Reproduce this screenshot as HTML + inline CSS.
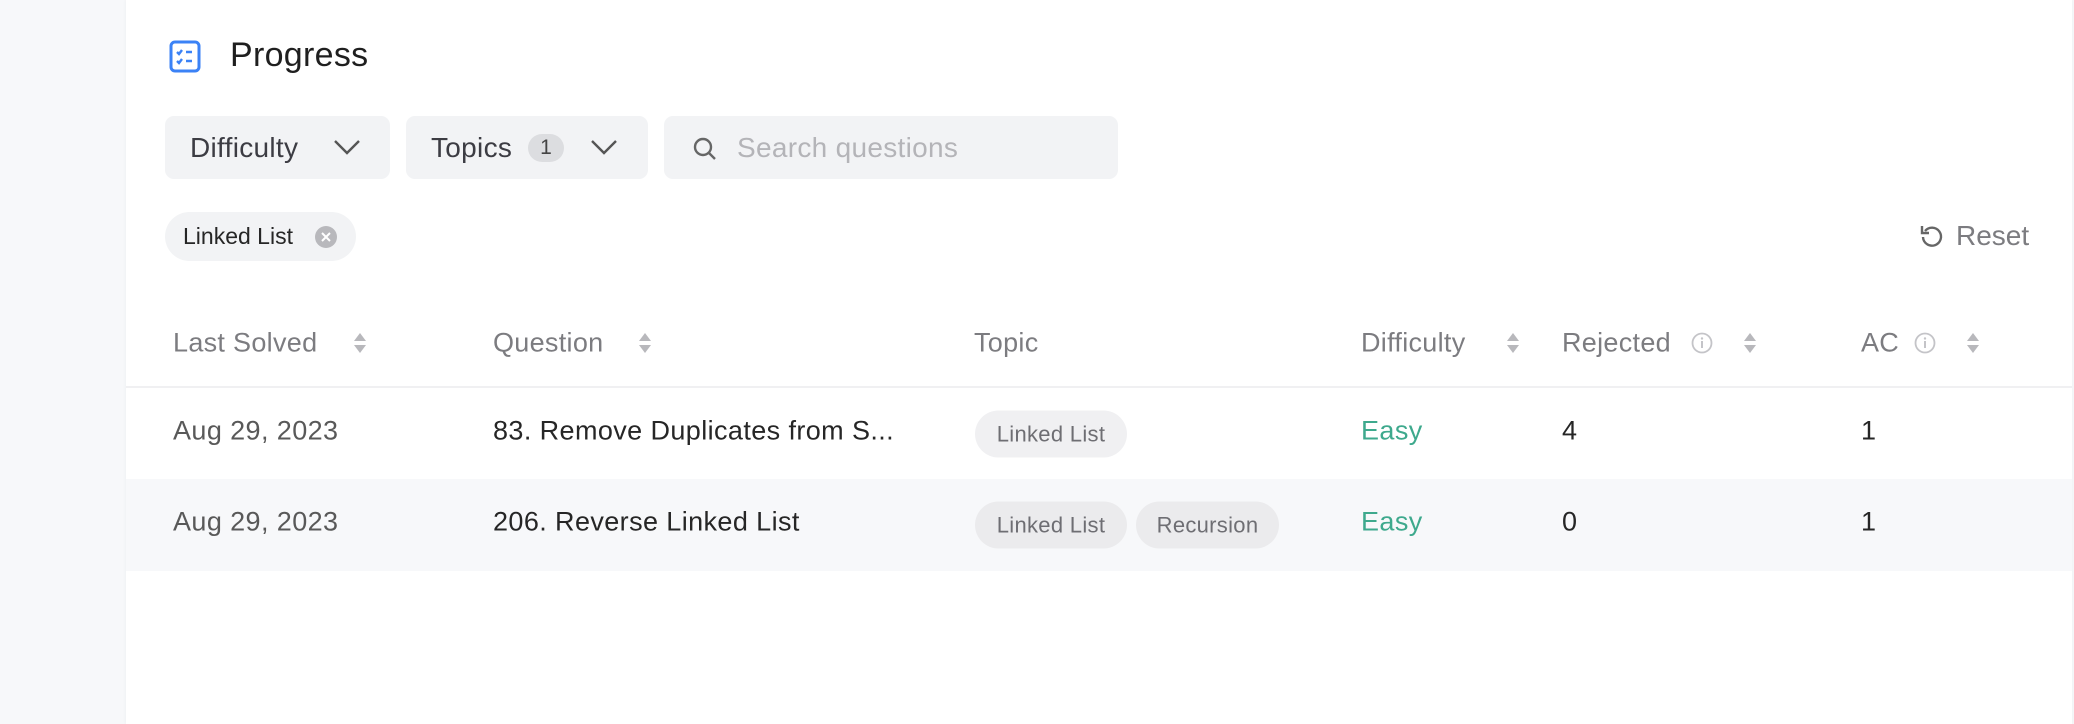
<!DOCTYPE html>
<html><head><meta charset="utf-8"><style>
*{box-sizing:border-box;margin:0;padding:0}
body{width:2074px;height:724px;background:#f7f8fa;font-family:"Liberation Sans",sans-serif;position:relative;overflow:hidden;color:#262626}
.card{position:absolute;left:126px;top:0;width:1946px;height:724px;background:#fff;box-shadow:0 0 4px rgba(0,0,0,.05)}
.a{position:absolute}
.btn{position:absolute;top:116px;height:63px;background:#f2f3f5;border-radius:9px;font-size:28px;letter-spacing:0.3px;color:#3c3c43;display:flex;align-items:center}
.hd{position:absolute;top:343px;transform:translateY(-50%);font-size:27px;letter-spacing:0.3px;color:#7c7c80}
.cell{position:absolute;transform:translateY(-50%);font-size:27px;letter-spacing:0.4px;color:#262626}
.tag{position:absolute;transform:translateY(-50%);height:47px;border-radius:24px;background:#f0f0f2;color:#6e6e73;font-size:22px;letter-spacing:0.3px;display:flex;align-items:center;justify-content:center}
.easy{color:#3ea98d}
</style></head><body>
<div class="card"></div>
<svg class="a" style="left:169px;top:40px" width="32" height="33" viewBox="0 0 32 33"><rect x="2" y="2" width="28" height="29" rx="4" fill="none" stroke="#3b82f6" stroke-width="3"/><path d="M8 12l2 2 3-4M8 21l2 2 3-4" stroke="#3b82f6" stroke-width="2.4" fill="none"/><path d="M17 12h6M17 21h6" stroke="#3b82f6" stroke-width="2.6"/></svg>
<div class="a" style="left:230px;top:36px;font-size:34px;letter-spacing:0.3px;color:#1f1f1f">Progress</div>

<div class="btn" style="left:165px;width:225px;padding-left:25px">Difficulty<svg style="position:absolute;left:168px;top:22px" width="28" height="18"><path d="M2 3l12 12 12-12" stroke="#555" stroke-width="2.4" fill="none"/></svg></div>
<div class="btn" style="left:406px;width:242px;padding-left:25px">Topics<span style="display:inline-block;margin-left:16px;width:36px;height:28px;border-radius:14px;background:#dcdde0;font-size:21px;text-align:center;line-height:28px;color:#444">1</span><svg style="position:absolute;left:184px;top:22px" width="28" height="18"><path d="M2 3l12 12 12-12" stroke="#555" stroke-width="2.4" fill="none"/></svg></div>
<div class="btn" style="left:664px;width:454px;padding-left:73px;color:#b4b4b8">Search questions<svg style="position:absolute;left:28px;top:20px" width="26" height="26"><circle cx="11" cy="11" r="8" stroke="#666" stroke-width="2.4" fill="none"/><path d="M17 17l6 6" stroke="#666" stroke-width="2.4"/></svg></div>

<div class="a" style="left:165px;top:212px;width:191px;height:49px;border-radius:25px;background:#f2f3f5;font-size:23px;color:#262626;padding-left:18px;line-height:49px">Linked List<svg style="position:absolute;left:150px;top:14px" width="22" height="22"><circle cx="11" cy="11" r="11" fill="#b8b8bc"/><path d="M7 7l8 8M15 7l-8 8" stroke="#fff" stroke-width="2"/></svg></div>

<svg class="a" style="left:1919px;top:223px" width="26" height="26" viewBox="0 0 26 26"><path d="M6 8A9 9 0 1 1 4 14" stroke="#666" stroke-width="2.4" fill="none"/><path d="M3 3v7h7" stroke="#666" stroke-width="2.4" fill="none"/></svg>
<div class="a" style="left:1956px;top:220px;font-size:28px;color:#7c7c80">Reset</div>

<div class="hd" style="left:173px">Last Solved</div>
<div class="hd" style="left:493px">Question</div>
<div class="hd" style="left:974px">Topic</div>
<div class="hd" style="left:1361px">Difficulty</div>
<div class="hd" style="left:1562px">Rejected</div>
<div class="hd" style="left:1861px">AC</div>
<svg class="a" style="left:352px;top:332px" width="16" height="22"><path d="M8 1l6 8H2zM8 21l6-8H2z" fill="#b8b8bc"/></svg>
<svg class="a" style="left:637px;top:332px" width="16" height="22"><path d="M8 1l6 8H2zM8 21l6-8H2z" fill="#b8b8bc"/></svg>
<svg class="a" style="left:1505px;top:332px" width="16" height="22"><path d="M8 1l6 8H2zM8 21l6-8H2z" fill="#b8b8bc"/></svg>
<svg class="a" style="left:1742px;top:332px" width="16" height="22"><path d="M8 1l6 8H2zM8 21l6-8H2z" fill="#b8b8bc"/></svg>
<svg class="a" style="left:1965px;top:332px" width="16" height="22"><path d="M8 1l6 8H2zM8 21l6-8H2z" fill="#b8b8bc"/></svg>
<svg class="a" style="left:1691px;top:332px" width="22" height="22"><circle cx="11" cy="11" r="9.5" stroke="#c4c4c8" stroke-width="1.8" fill="none"/><path d="M11 9v7" stroke="#c4c4c8" stroke-width="2"/><circle cx="11" cy="6.5" r="1.2" fill="#c4c4c8"/></svg>
<svg class="a" style="left:1914px;top:332px" width="22" height="22"><circle cx="11" cy="11" r="9.5" stroke="#c4c4c8" stroke-width="1.8" fill="none"/><path d="M11 9v7" stroke="#c4c4c8" stroke-width="2"/><circle cx="11" cy="6.5" r="1.2" fill="#c4c4c8"/></svg>

<div class="a" style="left:126px;top:386px;width:1946px;height:2px;background:#f0f0f2"></div>
<div class="a" style="left:126px;top:479px;width:1946px;height:92px;background:#f7f8fa"></div>

<div class="cell" style="left:173px;top:431px;color:#595959">Aug 29, 2023</div>
<div class="cell" style="left:493px;top:431px">83. Remove Duplicates from S...</div>
<div class="tag" style="left:975px;top:434px;width:152px">Linked List</div>
<div class="cell easy" style="left:1361px;top:431px">Easy</div>
<div class="cell" style="left:1562px;top:431px">4</div>
<div class="cell" style="left:1861px;top:431px">1</div>

<div class="cell" style="left:173px;top:522px;color:#595959">Aug 29, 2023</div>
<div class="cell" style="left:493px;top:522px">206. Reverse Linked List</div>
<div class="tag" style="left:975px;top:525px;width:152px;background:#ebebed">Linked List</div>
<div class="tag" style="left:1136px;top:525px;width:143px;background:#ebebed">Recursion</div>
<div class="cell easy" style="left:1361px;top:522px">Easy</div>
<div class="cell" style="left:1562px;top:522px">0</div>
<div class="cell" style="left:1861px;top:522px">1</div>
</body></html>
